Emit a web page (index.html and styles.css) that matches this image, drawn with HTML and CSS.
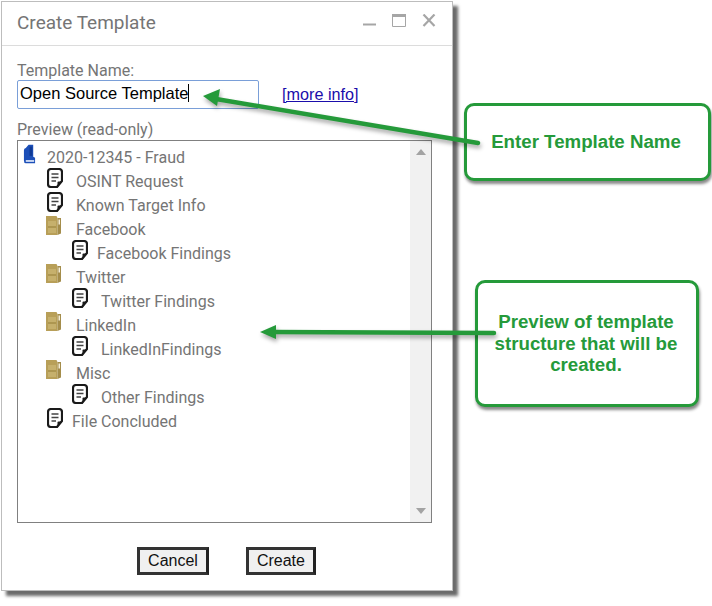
FILE: index.html
```html
<!DOCTYPE html>
<html lang="en">
<head>
  <meta charset="UTF-8">
  <meta name="viewport" content="width=device-width, initial-scale=1.0">
  <title>Create Template</title>
  <link rel="stylesheet" href="styles.css">
</head>
<body>
  <svg class="icon-defs" width="0" height="0">
    <symbol id="doc" viewBox="0 0 16 20">
      <path d="M4 1H12Q15 1 15 4V13L10 19H4Q1 19 1 16V4Q1 1 4 1Z" fill="#fff" stroke="#1a1a1a" stroke-width="2.200"/>
      <path d="M4.500 6H11.500M4.500 9.500H11.500M4.500 13H9" fill="none" stroke="#444" stroke-width="1.600"/>
      <path d="M15 13.500L10.500 19.500V14.500Q10.500 13.500 11.500 13.500Z" fill="#1a1a1a"/>
    </symbol>
    <symbol id="folder" viewBox="0 0 15 19">
      <path d="M0 0H10.500L11.500 2V19H0Z" fill="#b89f58"/>
      <path d="M2 5H10V17H2Z" fill="#c6b06c"/>
      <path d="M2 10H10V12H2Z" fill="#ad9650"/>
      <path d="M11.500 2H15V17.500L11.500 19Z" fill="#a48d4b"/>
      <path d="M12.500 3.500H14V8.500H12.500Z" fill="#f3ecd6"/>
    </symbol>
    <symbol id="book" viewBox="0 0 14 20">
      <path d="M1 17V6Q1 4 3 3.500L6 0H11V13L13 14V20H3Q1 20 1 17Z" fill="#1c4fb8"/>
      <path d="M3 16.500H12V18.500H3Z" fill="#cfdcf5"/>
      <path d="M7 2H10V12H7Z" fill="#0f3a94"/>
    </symbol>
  </svg>

  <div class="dialog">
    <header class="dialog-head">
      <h1>Create Template</h1>
      <div class="window-btns">
        <svg width="13" height="13" viewBox="0 0 13 13"><path d="M0 10.500H13" stroke="#a6a6a6" stroke-width="2"/></svg>
        <svg width="14" height="13" viewBox="0 0 14 13"><path d="M.5 .5H13.500V12.500H.5Z" fill="none" stroke="#a6a6a6"/><path d="M0 1.500H14" stroke="#a6a6a6" stroke-width="3"/></svg>
        <svg width="14" height="13" viewBox="0 0 14 13"><path d="M1.500 .5L12.500 12M12.500 .5L1.500 12" stroke="#a6a6a6" stroke-width="2.200"/></svg>
      </div>
    </header>

    <div class="dialog-body">
      <label class="field-label">Template Name:</label>
      <div class="name-row">
        <div class="name-input"><span class="caret">Open Source Template</span></div>
        <a href="#" class="more-link">[more info]</a>
      </div>

      <div class="field-label preview-label">Preview (read-only)</div>
      <div class="preview">
        <ul class="tree">
          <li class="row root"><svg class="ico-book"><use href="#book"/></svg>2020-12345 - Fraud</li>
          <li class="row lvl1"><svg class="ico-doc"><use href="#doc"/></svg>OSINT Request</li>
          <li class="row lvl1"><svg class="ico-doc"><use href="#doc"/></svg>Known Target Info</li>
          <li class="row lvl1 folder-row"><svg class="ico-folder"><use href="#folder"/></svg>Facebook</li>
          <li class="row lvl2 tight"><svg class="ico-doc"><use href="#doc"/></svg>Facebook Findings</li>
          <li class="row lvl1 folder-row"><svg class="ico-folder"><use href="#folder"/></svg>Twitter</li>
          <li class="row lvl2"><svg class="ico-doc"><use href="#doc"/></svg>Twitter Findings</li>
          <li class="row lvl1 folder-row"><svg class="ico-folder"><use href="#folder"/></svg>LinkedIn</li>
          <li class="row lvl2"><svg class="ico-doc"><use href="#doc"/></svg>LinkedInFindings</li>
          <li class="row lvl1 folder-row"><svg class="ico-folder"><use href="#folder"/></svg>Misc</li>
          <li class="row lvl2"><svg class="ico-doc"><use href="#doc"/></svg>Other Findings</li>
          <li class="row lvl1 tight"><svg class="ico-doc"><use href="#doc"/></svg>File Concluded</li>
        </ul>
        <div class="scrollbar">
          <span class="arrow-up"></span>
          <span class="arrow-down"></span>
        </div>
      </div>

      <div class="actions">
        <button type="button">Cancel</button>
        <button type="button">Create</button>
      </div>
    </div>
  </div>

  <!-- callouts sit on top of the dialog, arrows run over their edge -->
  <div class="callout callout-name">Enter Template Name</div>
  <div class="callout callout-preview">Preview of template structure that will be created.</div>
  <svg class="arrows" width="712" height="606" viewBox="0 0 712 606">
    <path d="M478 143L216 99" stroke="#259a3a" stroke-width="4.500" stroke-linecap="round"/>
    <path d="M203 96L220 89L217 106Z" fill="#259a3a"/>
    <path d="M494 333L272 332" stroke="#259a3a" stroke-width="4.500" stroke-linecap="round"/>
    <path d="M260 332L276 325V339Z" fill="#259a3a"/>
  </svg>
</body>
</html>
```

FILE: styles.css
```css
body {
  margin: 0;
  width: 712px;
  height: 606px;
  position: relative;
  overflow: hidden;
  background: white;
  font-family: Roboto, sans-serif;
}

.icon-defs {
  position: absolute;
}

.dialog {
  width: 450px;
  height: 588px;
  margin: 1px 0 0 1px;
  border: 1px solid #bdbdbd;
  background: white;
  box-shadow: 5px 5px 3px #6b6b6b;
}

.dialog-head {
  height: 41px;
  padding: 0 16px 2px 15px;
  display: flex;
  align-items: center;
  justify-content: space-between;
  border-bottom: 1px solid #dcdcdc;
}

.dialog-head h1 {
  margin: 0;
  font-size: 19px;
  font-weight: 400;
  color: #757575;
}

.window-btns {
  display: flex;
  gap: 16px;
  margin-top: -4px;
}

.dialog-body {
  padding: 15px 20px 0 15px;
}

.field-label {
  font-size: 16px;
  line-height: 18px;
  color: #757575;
}

.name-row {
  display: flex;
  align-items: center;
  gap: 23px;
}

.name-input {
  width: 238px;
  height: 27px;
  border: 1px solid #7a9fd8;
  border-radius: 2px;
  padding-left: 2px;
  font-family: "Liberation Sans", sans-serif;
  font-size: 16.500px;
  line-height: 24px;
  color: black;
}

.caret {
  border-right: 1px solid black;
}

.more-link {
  font-family: "Liberation Sans", sans-serif;
  font-size: 16.200px;
  color: #1a0dab;
}

.preview-label {
  margin-top: 12px;
}

.preview {
  height: 381px;
  margin-top: 1px;
  border: 1px solid #808080;
  display: flex;
}

.tree {
  flex: 1;
  margin: 0;
  padding: 5px 0 0;
  list-style: none;
  font-size: 16px;
  color: #757575;
}

.row {
  height: 24px;
  line-height: 24px;
  display: flex;
  gap: 13px;
}

.root {
  padding-left: 5px;
  gap: 11px;
}

.lvl1 {
  padding-left: 29px;
}

.lvl2 {
  padding-left: 54px;
}

.row.tight {
  gap: 9px;
}

.row.folder-row {
  padding-left: 28px;
  gap: 15px;
}

.ico-doc {
  width: 16px;
  height: 20px;
  margin-top: -2px;
}

.ico-folder {
  width: 15px;
  height: 19px;
  margin-top: -2px;
}

.ico-book {
  width: 13px;
  height: 20px;
  margin-top: -2px;
}

.scrollbar {
  width: 21px;
  background: #f1f1f1;
  display: flex;
  flex-direction: column;
  align-items: center;
  justify-content: space-between;
  padding: 8px 0;
  box-sizing: border-box;
}

.arrow-up {
  border: 5px solid transparent;
  border-top: 0;
  border-bottom: 6px solid #a3a3a3;
}

.arrow-down {
  border: 5px solid transparent;
  border-bottom: 0;
  border-top: 6px solid #a3a3a3;
}

.actions {
  display: flex;
  justify-content: center;
  gap: 37px;
  margin-top: 24px;
  padding-left: 4px;
}

.actions button {
  height: 28px;
  padding: 0 8px;
  border: 3px solid #333;
  border-right-color: #222;
  background: #f0f0f0;
  font-family: "Liberation Sans", sans-serif;
  font-size: 16px;
  color: #111;
}

.arrows {
  position: absolute;
  left: 0;
  top: 0;
  filter: drop-shadow(1px 3px 2px rgba(0, 0, 0, 0.35));
}

.callout {
  position: absolute;
  box-sizing: border-box;
  display: flex;
  align-items: center;
  justify-content: center;
  text-align: center;
  background: white;
  border: 3px solid #259a3a;
  border-radius: 10px;
  box-shadow: 1px 3px 3px #8a8a8a;
  font-family: "Liberation Sans", sans-serif;
  font-size: 18.700px;
  font-weight: bold;
  line-height: 21.500px;
  color: #259a3a;
}

.callout-name {
  left: 464px;
  top: 103px;
  width: 247px;
  height: 78px;
  padding-right: 3px;
}

.callout-preview {
  left: 475px;
  top: 280px;
  width: 224px;
  height: 127px;
  padding: 0 17px 0 15px;
}
```
